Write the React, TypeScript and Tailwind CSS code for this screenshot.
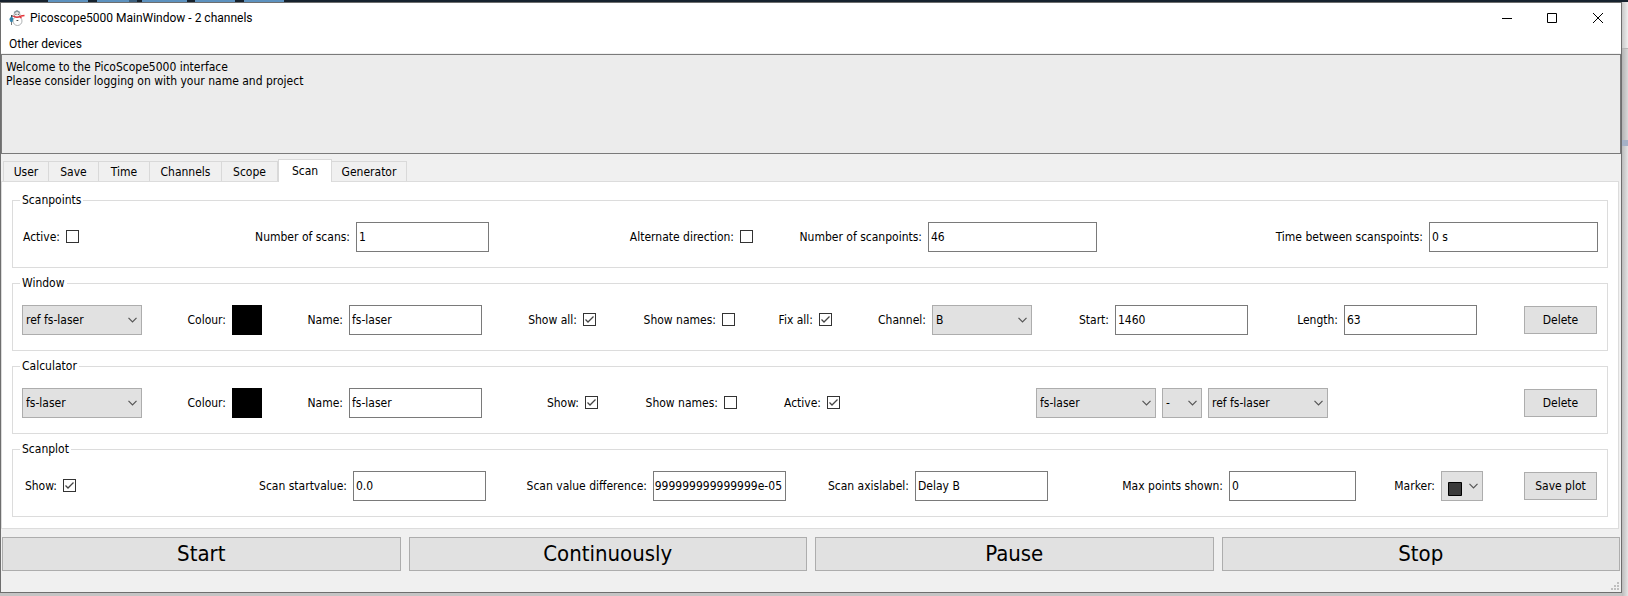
import React, { useId } from 'react';

function Field({ label, children }: { label: string; children: (id: string) => React.ReactNode }) {
  const id = useId();
  return (
    <div className="flex min-w-0 items-center justify-end gap-1.5">
      <label htmlFor={id} className="whitespace-nowrap">{label}</label>
      {children(id)}
    </div>
  );
}

function TextField({ label, value, width = 'w-[133px]', end = false }: { label: string; value: string; width?: string; end?: boolean }) {
  return (
    <Field label={label}>
      {(id) => (
        <input
          id={id}
          type="text"
          defaultValue={value}
          dir={end ? 'rtl' : 'ltr'}
          className={`h-[30px] shrink-0 border border-[#7a7a7a] bg-white outline-none ${end ? 'pr-[3px]' : 'px-0.5'} ${width}`}
        />
      )}
    </Field>
  );
}

function Check({ label, on = false }: { label: string; on?: boolean }) {
  return (
    <Field label={label}>
      {(id) => (
        <span className="mb-0.5 grid size-[13px] shrink-0">
          <input
            id={id}
            type="checkbox"
            defaultChecked={on}
            className="peer col-start-1 row-start-1 size-[13px] appearance-none border border-[#333] bg-white"
          />
          <svg viewBox="0 0 13 13" className="pointer-events-none invisible col-start-1 row-start-1 size-[13px] peer-checked:visible">
            <path d="M2.500 6.500 5 9 10.500 3.500" fill="none" stroke="#444" strokeWidth="1.3" />
          </svg>
        </span>
      )}
    </Field>
  );
}

function Select({ value, id, label, width, marker = false }: { value: string; id?: string; label?: string; width: string; marker?: boolean }) {
  return (
    <span className={`grid h-[30px] shrink-0 ${width}`}>
      <select
        id={id}
        aria-label={label}
        className={`col-start-1 row-start-1 h-[30px] w-full appearance-none border border-[#adadad] bg-[#e1e1e1] pl-[3px] outline-none ${marker ? 'text-transparent' : ''}`}
      >
        <option>{value}</option>
      </select>
      {marker && (
        <svg viewBox="0 0 14 14" className="pointer-events-none col-start-1 row-start-1 ml-[7px] mt-[11px] size-3.5">
          <path d="M.5 .5h13v13H.5z" fill="#3a3a3a" stroke="#000" />
        </svg>
      )}
      <svg viewBox="0 0 9 6" className="pointer-events-none col-start-1 row-start-1 mr-[5px] h-1.5 w-[9px] self-center justify-self-end">
        <path d="M.5 .8 4.500 4.800 8.500 .8" fill="none" stroke="#555" strokeWidth="1.2" />
      </svg>
    </span>
  );
}

function Swatch() {
  return <Field label="Colour:">{(id) => <button id={id} type="button" className="size-[30px] shrink-0 bg-black" />}</Field>;
}

function Push({ children }: { children: string }) {
  return (
    <button type="button" className="mr-px h-7 w-[73px] justify-self-end whitespace-nowrap border border-[#adadad] bg-[#e1e1e1]">
      {children}
    </button>
  );
}

function Group({ title, cols, children }: { title: string; cols: string; children: React.ReactNode }) {
  return (
    <fieldset className="h-[76px] border border-[#dcdcdc] px-[9px]">
      <legend className="-ml-0.5 h-4 px-0.5 leading-4">{title}</legend>
      <div className={`mt-3.5 grid h-[30px] items-center ${cols}`}>{children}</div>
    </fieldset>
  );
}

function Snowman() {
  return (
    <svg viewBox="0 0 16 16" className="size-4">
      <circle cx="8.500" cy="11" r="4.500" fill="#fff" stroke="#9a9ea1" strokeWidth=".8" />
      <circle cx="8" cy="4.500" r="3" fill="#f1f1f1" stroke="#8b8f92" strokeWidth=".8" />
      <path d="M5 2.500 8 .8 11 2.500" fill="none" stroke="#84959c" strokeWidth="1.400" />
      <path d="M4 6Q8 8.500 12 6L15.500 5.500M10.500 6.500 12.500 8" fill="none" stroke="#e4363c" strokeWidth="1.400" />
      <path d="M2.500 5v10" stroke="#555" strokeWidth=".8" />
      <path d="M2.500 6 4.300 8.500 3.500 12H1.500L.3 9z" fill="#2f83ad" />
      <path d="M2 6h2" stroke="#222" strokeWidth="1.200" />
      <path d="M6.300 4.300h1.200M8.800 4.300H10M7.500 10.500h1.800" stroke="#333" strokeWidth=".9" />
    </svg>
  );
}

const tabs = [
  ['User', 'w-[46px]'],
  ['Save', 'w-[50px]'],
  ['Time', 'w-[51px]'],
  ['Channels', 'w-[72px]'],
  ['Scope', 'w-[56px]'],
  ['Scan', 'w-[54px]'],
  ['Generator', 'w-[75px]'],
];

export default function App() {
  return (
    <div className="flex min-h-screen flex-col bg-[#c4c4c4] text-[12px] text-black [font-family:'DejaVu_Sans_Condensed','DejaVu_Sans',sans-serif]">
      <div className="flex h-0.5 bg-[#16222e] pl-12">
        <div className="mr-[9px] w-10 bg-[#5d92bf]" />
        <div className="w-8 bg-[#5d92bf]" />
        <div className="mr-[5px] w-2 bg-[#3d607e]" />
        <div className="mr-2 w-[45px] bg-[#5d92bf]" />
        <div className="mr-[9px] w-10 bg-[#5d92bf]" />
        <div className="w-10 bg-[#5d92bf]" />
      </div>
      <div className="flex grow">
        <main className="mb-[3px] flex min-w-0 grow flex-col border border-[#6e6e6e] bg-[#f0f0f0]">
          <header className="flex h-[29px] items-center bg-white pl-2 [font-family:Roboto,sans-serif]">
            <Snowman />
            <h1 className="ml-[5px] grow">Picoscope5000 MainWindow - 2 channels</h1>
            <button type="button" aria-label="Minimize" className="grid h-[29px] w-[45px] place-items-center">
              <svg viewBox="0 0 10 10" className="size-2.5"><path d="M0 5.500h10" stroke="#000" /></svg>
            </button>
            <button type="button" aria-label="Maximize" className="grid h-[29px] w-[46px] place-items-center">
              <svg viewBox="0 0 10 10" className="size-2.5"><path d="M.5 .5h9v9h-9z" fill="none" stroke="#000" /></svg>
            </button>
            <button type="button" aria-label="Close" className="grid h-[29px] w-[46px] place-items-center">
              <svg viewBox="0 0 10 10" className="size-2.5"><path d="M0 0l10 10M10 0 0 10" stroke="#000" /></svg>
            </button>
          </header>
          <nav className="flex h-[22px] items-center border-b border-[#f0f0f0] bg-white pl-2 pt-0.5 [font-family:Roboto,sans-serif]">
            <button type="button">Other devices</button>
          </nav>
          <div className="h-[100px] border border-[#7a7a7a] bg-[#ececec] px-1 pt-[5px] leading-[14px]">
            <p>Welcome to the PicoScope5000 interface</p>
            <p>Please consider logging on with your name and project</p>
          </div>
          <div role="tablist" className="mt-[5px] flex h-[22px] items-end pl-0.5">
            {tabs.map(([name, width]) =>
              name === 'Scan' ? (
                <button key={name} role="tab" aria-selected="true" className={`z-10 -mb-px h-[23px] border border-b-0 border-[#d9d9d9] bg-white ${width}`}>
                  {name}
                </button>
              ) : (
                <button key={name} role="tab" className={`h-5 border border-b-0 border-[#d9d9d9] bg-[#f0f0f0] pt-px not-first:border-l-0 ${width}`}>
                  {name}
                </button>
              ),
            )}
          </div>
          <section className="mr-0.5 flex flex-col gap-[7px] border border-[#dcdcdc] bg-white pb-[11px] pl-2.5 pr-2.5 pt-2.5">
            <Group title="Scanpoints" cols="grid-cols-[57fr_410fr_264fr_344fr_501fr]">
              <Check label="Active:" />
              <TextField label="Number of scans:" value="1" />
              <Check label="Alternate direction:" />
              <TextField label="Number of scanpoints:" value="46" width="w-[169px]" />
              <TextField label="Time between scanspoints:" value="0 s" width="w-[169px]" />
            </Group>
            <Group title="Window" cols="grid-cols-[120fr_120fr_220fr_114fr_139fr_97fr_200fr_216fr_229fr_121fr]">
              <Select label="Window" value="ref fs-laser" width="w-[120px]" />
              <Swatch />
              <TextField label="Name:" value="fs-laser" />
              <Check label="Show all:" on />
              <Check label="Show names:" />
              <Check label="Fix all:" on />
              <Field label="Channel:">{(id) => <Select id={id} value="B" width="w-[100px]" />}</Field>
              <TextField label="Start:" value="1460" />
              <TextField label="Length:" value="63" />
              <Push>Delete</Push>
            </Group>
            <Group title="Calculator" cols="grid-cols-[120fr_120fr_220fr_116fr_139fr_103fr_488fr_270fr]">
              <Select label="Calculator" value="fs-laser" width="w-[120px]" />
              <Swatch />
              <TextField label="Name:" value="fs-laser" />
              <Check label="Show:" on />
              <Check label="Show names:" />
              <Check label="Active:" on />
              <div className="flex justify-end gap-1.5">
                <Select label="First operand" value="fs-laser" width="w-[120px]" />
                <Select label="Operator" value="-" width="w-10" />
                <Select label="Second operand" value="ref fs-laser" width="w-[120px]" />
              </div>
              <Push>Delete</Push>
            </Group>
            <Group title="Scanplot" cols="grid-cols-[54fr_410fr_300fr_262fr_308fr_127fr_115fr]">
              <Check label="Show:" on />
              <TextField label="Scan startvalue:" value="0.0" />
              <TextField label="Scan value difference:" value="9.999999999999999e-05" end />
              <TextField label="Scan axislabel:" value="Delay B" />
              <TextField label="Max points shown:" value="0" width="w-[127px]" />
              <Field label="Marker:">{(id) => <Select id={id} value="■" width="w-[42px]" marker />}</Field>
              <Push>Save plot</Push>
            </Group>
          </section>
          <div className="mt-2 grid grid-cols-4 gap-2 px-px text-[22px]">
            {['Start', 'Continuously', 'Pause', 'Stop'].map((name) => (
              <button key={name} type="button" className="h-[34px] border border-[#adadad] bg-[#e1e1e1] leading-8">{name}</button>
            ))}
          </div>
          <footer className="flex grow items-end justify-end p-0.5">
            <svg viewBox="0 0 8 8" className="size-2" fill="#bfbfbf">
              <path d="M6 0h2v2H6zM3 3h2v2H3zM6 3h2v2H6zM0 6h2v2H0zM3 6h2v2H3zM6 6h2v2H6z" />
            </svg>
          </footer>
        </main>
        <aside className="flex w-1.5 flex-col bg-linear-to-r from-[#bcbcbc] to-[#e4e4e4]">
          <div className="h-[46px] bg-linear-to-r from-[#c8c8c8] to-[#efefef]" />
          <div className="h-[92px] border-t border-[#b5b5b5] bg-linear-to-r from-[#b4b4b4] to-[#d8d8d8]" />
          <div className="h-1.5 bg-[#a5b1c6]" />
        </aside>
      </div>
    </div>
  );
}
